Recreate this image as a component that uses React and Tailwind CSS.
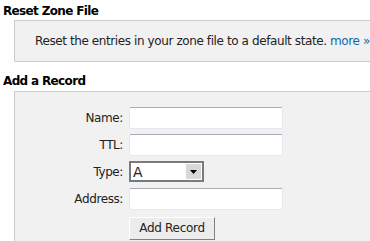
export default function App() {
  const font = { fontFamily: '"DejaVu Sans", Verdana, sans-serif' };
  const Input = ({ w = 'w-[154px]' }) => (
    <div className={`${w} h-[22px] bg-white rounded-[2px] border border-[#e3e9ef] border-t-[#abadb3]`} />
  );
  const Row = ({ label, children }) => (
    <div className="flex items-center h-[27px]">
      <div className="w-[114px] text-right pr-[6px] text-[12px] tracking-[-0.4px] text-[#222]">{label}</div>
      {children}
    </div>
  );
  return (
    <div className="w-[370px] h-[241px] bg-white overflow-hidden text-[#222]" style={font}>
      <div className="pl-[3px] pt-[4px] text-[12px] font-bold tracking-[-0.65px] text-black leading-[14px]">Reset Zone File</div>
      <div className="ml-[14px] mt-[2px] h-[42px] w-[400px] bg-[#f1f1f1] border border-[#cccccc] flex items-center pl-[20px] text-[12px] tracking-[-0.4px] whitespace-nowrap">
        Reset the entries in your zone file to a default state.&nbsp;<span className="text-[#1166aa]">more »</span>
      </div>
      <div className="pl-[3px] mt-[12px] text-[12px] font-bold tracking-[-0.65px] text-black leading-[14px]">Add a Record</div>
      <div className="ml-[14px] mt-[3px] w-[400px] h-[200px] bg-[#f1f1f1] border border-[#cccccc] pt-[12px]">
        <Row label="Name:"><Input /></Row>
        <Row label="TTL:"><Input /></Row>
        <Row label="Type:">
          <div className="w-[75px] h-[21px] bg-white border-2 border-[#7a7a7a] flex items-center justify-between">
            <span className="pl-[2px] text-[14px] leading-none">A</span>
            <div className="w-[17px] h-[17px] bg-[#d8d8d8] border border-white flex items-center justify-center">
              <svg width="7" height="4" viewBox="0 0 7 4"><path d="M0 0h7L3.5 4z" fill="#000" /></svg>
            </div>
          </div>
        </Row>
        <Row label="Address:"><Input /></Row>
        <div className="pl-[114px] pt-[3px]">
          <button className="w-[86px] h-[23px] bg-[#ececec] border border-[#ffffff] border-r-[#808080] border-b-[#808080] text-[12px] tracking-[-0.3px] text-[#222]" style={font}>Add Record</button>
        </div>
      </div>
    </div>
  );
}
